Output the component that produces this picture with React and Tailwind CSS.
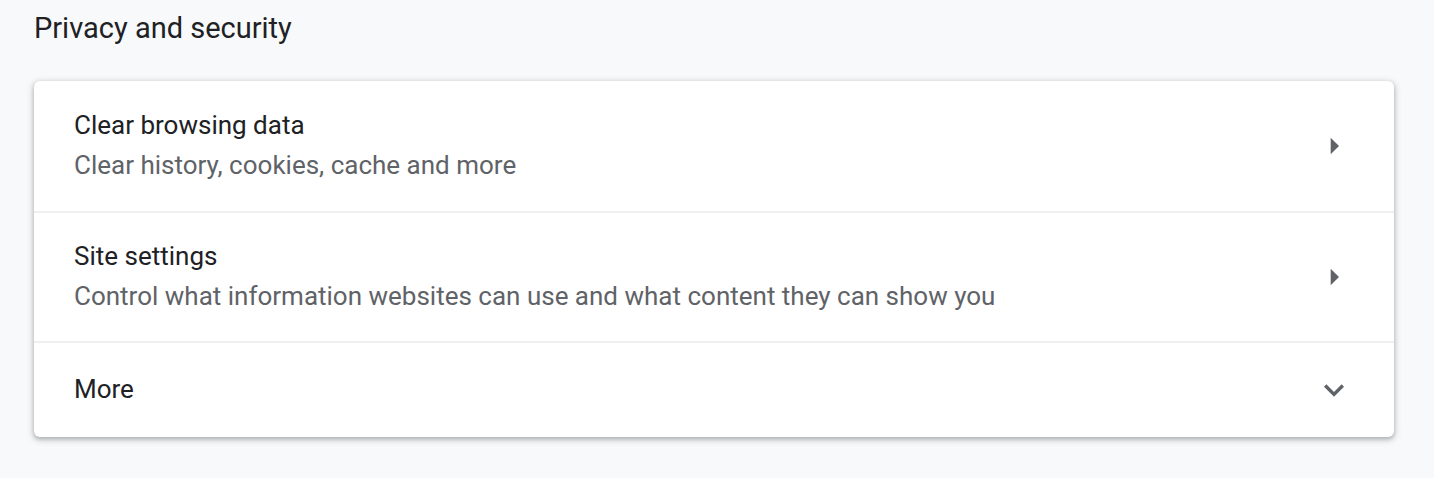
const ROWS = [
  { title: 'Clear browsing data', sub: 'Clear history, cookies, cache and more' },
  { title: 'Site settings', sub: 'Control what information websites can use and what content they can show you' },
]

function ArrowRight() {
  return (
    <svg width="40" height="40" viewBox="0 0 24 24" fill="#5f6368">
      <path d="M10 17l5-5-5-5v10z" />
    </svg>
  )
}

function ExpandMore() {
  return (
    <svg width="40" height="40" viewBox="0 0 24 24" fill="#5f6368">
      <path d="M16.59 8.59L12 13.17 7.41 8.59 6 10l6 6 6-6z" />
    </svg>
  )
}

export default function App() {
  return (
    <div
      className="min-h-screen bg-[#f8f9fa] text-[#202124]"
      style={{ fontFamily: 'Roboto, "Liberation Sans", sans-serif' }}
    >
      <div className="h-[81px] pt-[8px] pl-[34px]">
        <h2 className="text-[29px] leading-[40px] font-normal">Privacy and security</h2>
      </div>

      <div className="ml-[34px] w-[1360px] bg-white rounded-[6px] shadow-[0_2px_4px_0_rgba(60,64,67,0.3),0_2px_6px_2px_rgba(60,64,67,0.15)]">
        {ROWS.map((row, i) => (
          <div
            key={row.title}
            className={`flex items-center h-[130px] pl-[40px] pr-[40px] ${i > 0 ? 'border-t-2 border-[#efefef]' : ''}`}
          >
            <div className="flex-1 text-[26px] leading-[40px] pb-[2px]">
              <div className="text-[#202124]">{row.title}</div>
              <div className="text-[#5f6368]">{row.sub}</div>
            </div>
            <ArrowRight />
          </div>
        ))}
        <div className="flex items-center h-[96px] pl-[40px] pr-[40px] border-t-2 border-[#efefef]">
          <div className="flex-1 text-[26px] leading-[40px] pb-[2px]">More</div>
          <ExpandMore />
        </div>
      </div>
    </div>
  )
}
